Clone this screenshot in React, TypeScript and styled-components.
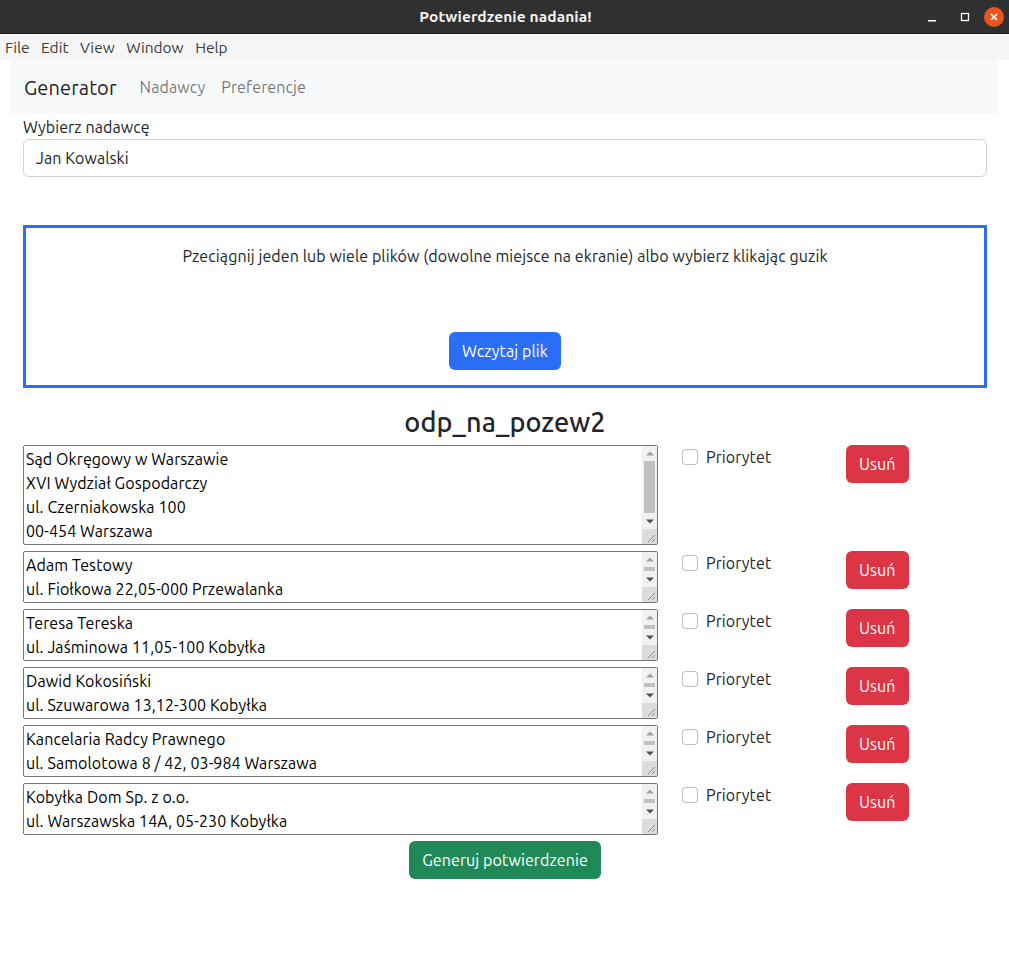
import React from "react";
import styled, { createGlobalStyle } from "styled-components";

const Global = createGlobalStyle`
  html, body { margin: 0; padding: 0; background: #fff; }
  body { font-family: "Ubuntu", "Noto Sans", "Open Sans", sans-serif; color: #212529; letter-spacing: 0.1px; }
  * { box-sizing: border-box; }
`;

const Window = styled.div`
  width: 1009px;
  min-height: 965px;
  display: flex;
  flex-direction: column;
  background: #fff;
`;

const TitleBar = styled.div`
  height: 34px;
  background: #303030;
  border-bottom: 1px solid #1f1f1f;
  display: grid;
  grid-template-columns: 1fr auto 1fr;
  align-items: center;
`;

const Title = styled.div`
  grid-column: 2;
  color: #f2f2f2;
  font-weight: 700;
  font-size: 15.5px;
  padding-left: 2px;
`;

const Controls = styled.div`
  grid-column: 3;
  justify-self: end;
  display: flex;
  align-items: center;
  padding-right: 5px;
`;

const Ctrl = styled.div`
  width: 33px;
  height: 22px;
  display: flex;
  align-items: center;
  justify-content: center;
`;

const CloseBtn = styled.div`
  width: 20px;
  height: 20px;
  border-radius: 50%;
  background: #e95420;
  display: flex;
  align-items: center;
  justify-content: center;
  margin-left: 3px;
`;

const MenuBar = styled.div`
  height: 26px;
  background: #f6f6f6;
  display: flex;
  align-items: center;
  padding-left: 5px;
  gap: 11.5px;
`;

const MenuItem = styled.span`
  font-size: 15.5px;
  color: #3c3c3c;
  letter-spacing: 0;
`;

const Container = styled.div`
  padding: 0 11px;
  display: flex;
  flex-direction: column;
`;

const Navbar = styled.nav`
  height: 54px;
  background: #f8f9fa;
  display: flex;
  align-items: center;
  padding-left: 13px;
`;

const Brand = styled.span`
  font-size: 20px;
  color: rgba(0, 0, 0, 0.9);
  margin-right: 23px;
`;

const NavLink = styled.span`
  font-size: 16px;
  color: rgba(0, 0, 0, 0.55);
  margin-right: 16px;
`;

const Content = styled.div`
  padding: 0 11px 0 12px;
  display: flex;
  flex-direction: column;
`;

const Label = styled.label`
  display: block;
  font-size: 16px;
  line-height: 24px;
  margin-top: 1px;
`;

const Input = styled.div`
  height: 38px;
  border: 1px solid #ced4da;
  border-radius: 6px;
  display: flex;
  align-items: center;
  padding: 0 12px;
  font-size: 16px;
`;

const DropZone = styled.div`
  margin-top: 48px;
  border: 3px solid #2b6ef5;
  height: 163px;
  display: flex;
  flex-direction: column;
  align-items: center;
  padding-top: 16px;
`;

const DropText = styled.p`
  margin: 0;
  font-size: 16px;
  line-height: 24px;
`;

const Button = styled.button<{ $variant: "primary" | "danger" | "success" }>`
  font-family: inherit;
  letter-spacing: inherit;
  font-size: 16px;
  line-height: 24px;
  padding: 6px 12px;
  border-radius: 6px;
  border: 1px solid transparent;
  color: #fff;
  background: ${(p) =>
    p.$variant === "primary" ? "#2a6ef6" : p.$variant === "danger" ? "#dc3545" : "#1f8a58"};
  height: 38px;
  white-space: nowrap;
  justify-self: start;
`;

const LoadButton = styled(Button)`
  margin-top: 64px;
`;

const Heading = styled.h2`
  margin: 18px 0 7px;
  text-align: center;
  font-size: 27px;
  font-weight: 500;
  line-height: 32px;
`;

const Rows = styled.div`
  display: flex;
  flex-direction: column;
  gap: 6px;
`;

const Row = styled.div`
  display: grid;
  grid-template-columns: 635px 140px auto;
  column-gap: 24px;
  align-items: start;
`;

const AreaWrap = styled.div`
  position: relative;
  width: 635px;
`;

const Area = styled.textarea<{ $h: number }>`
  display: block;
  height: ${(p) => p.$h}px;
  width: 635px;
  font-family: inherit;
  letter-spacing: inherit;
  font-size: 16px;
  line-height: 24px;
  padding: 1px 18px 1px 2px;
  border: 1px solid #767676;
  border-radius: 2px;
  color: #000;
  overflow: hidden;
  resize: none;
  outline: none;
`;

const ScrollBar = styled.div`
  position: absolute;
  top: 1px;
  right: 1px;
  bottom: 1px;
  width: 15px;
  background: #f1f1f1;
  display: flex;
  flex-direction: column;
`;

const ArrowBtn = styled.div`
  height: 15px;
  flex: none;
  display: flex;
  align-items: center;
  justify-content: center;
`;

const Track = styled.div`
  flex: 1;
  padding: 0 2px 1px;
  display: flex;
`;

const Thumb = styled.div`
  flex: 1;
  background: #c1c1c1;
`;

const Corner = styled.div`
  height: 15px;
  flex: none;
  background: #dcdcdc;
  display: flex;
  align-items: flex-end;
  justify-content: flex-end;
`;

const Check = styled.label`
  display: flex;
  align-items: center;
  gap: 8px;
  font-size: 16px;
  line-height: 24px;
`;

const Box = styled.input`
  appearance: none;
  width: 16px;
  height: 16px;
  margin: 0;
  border: 1px solid rgba(0, 0, 0, 0.25);
  border-radius: 4px;
  background: #fff;
`;

const Footer = styled.div`
  display: flex;
  justify-content: center;
  margin-top: 6px;
`;

const recipients = [
  { text: "Sąd Okręgowy w Warszawie\nXVI Wydział Gospodarczy\nul. Czerniakowska 100\n00-454 Warszawa", h: 100 },
  { text: "Adam Testowy\nul. Fiołkowa 22,05-000 Przewalanka", h: 52 },
  { text: "Teresa Tereska\nul. Jaśminowa 11,05-100 Kobyłka", h: 52 },
  { text: "Dawid Kokosiński\nul. Szuwarowa 13,12-300 Kobyłka", h: 52 },
  { text: "Kancelaria Radcy Prawnego\nul. Samolotowa 8 / 42, 03-984 Warszawa", h: 52 },
  { text: "Kobyłka Dom Sp. z o.o.\nul. Warszawska 14A, 05-230 Kobyłka", h: 52 },
];

function FakeScroll() {
  return (
    <ScrollBar>
      <ArrowBtn>
        <svg width="8" height="5" viewBox="0 0 8 5">
          <path d="M0 4.5 L4 0.5 L8 4.5 Z" fill="#a3a3a3" />
        </svg>
      </ArrowBtn>
      <Track>
        <Thumb />
      </Track>
      <ArrowBtn>
        <svg width="8" height="5" viewBox="0 0 8 5">
          <path d="M0 0.5 L4 4.5 L8 0.5 Z" fill="#505050" />
        </svg>
      </ArrowBtn>
      <Corner>
        <svg width="15" height="15" viewBox="0 0 15 15">
          <path d="M6 13 L13 6 M10 13 L13 10" stroke="#8a8a8a" strokeWidth="1" />
        </svg>
      </Corner>
    </ScrollBar>
  );
}

export default function App() {
  return (
    <Window>
      <Global />
      <TitleBar>
        <Title>Potwierdzenie nadania!</Title>
        <Controls>
          <Ctrl>
            <svg width="10" height="10" viewBox="0 0 10 10">
              <rect x="1" y="8" width="8" height="1.5" fill="#fff" />
            </svg>
          </Ctrl>
          <Ctrl>
            <svg width="10" height="10" viewBox="0 0 10 10">
              <rect x="1.5" y="1.5" width="7" height="7" fill="none" stroke="#fff" strokeWidth="1.3" />
            </svg>
          </Ctrl>
          <CloseBtn>
            <svg width="10" height="10" viewBox="0 0 10 10">
              <path d="M2 2 L8 8 M8 2 L2 8" stroke="#fff" strokeWidth="1.6" />
            </svg>
          </CloseBtn>
        </Controls>
      </TitleBar>
      <MenuBar>
        {["File", "Edit", "View", "Window", "Help"].map((m) => (
          <MenuItem key={m}>{m}</MenuItem>
        ))}
      </MenuBar>
      <Container>
        <Navbar>
          <Brand>Generator</Brand>
          <NavLink>Nadawcy</NavLink>
          <NavLink>Preferencje</NavLink>
        </Navbar>
        <Content>
          <Label>Wybierz nadawcę</Label>
          <Input>Jan Kowalski</Input>
          <DropZone>
            <DropText>
              Pzeciągnij jeden lub wiele plików (dowolne miejsce na ekranie) albo wybierz klikając guzik
            </DropText>
            <LoadButton $variant="primary">Wczytaj plik</LoadButton>
          </DropZone>
          <Heading>odp_na_pozew2</Heading>
          <Rows>
            {recipients.map((r, i) => (
              <Row key={i}>
                <AreaWrap>
                  <Area $h={r.h} defaultValue={r.text} />
                  <FakeScroll />
                </AreaWrap>
                <Check>
                  <Box type="checkbox" />
                  Priorytet
                </Check>
                <Button $variant="danger">Usuń</Button>
              </Row>
            ))}
          </Rows>
          <Footer>
            <Button $variant="success">Generuj potwierdzenie</Button>
          </Footer>
        </Content>
      </Container>
    </Window>
  );
}
